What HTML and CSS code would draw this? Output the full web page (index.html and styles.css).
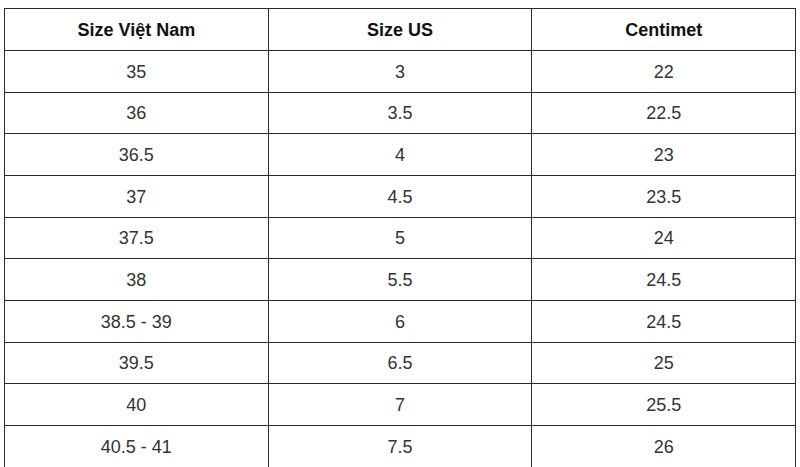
FILE: index.html
```html
<!DOCTYPE html>
<html lang="vi">
<head>
<meta charset="utf-8">
<title>Bảng size</title>
<link rel="stylesheet" href="styles.css">
</head>
<body>
<table class="size-table">
  <thead>
    <tr><th>Size Việt Nam</th><th>Size US</th><th>Centimet</th></tr>
  </thead>
  <tbody>
    <tr><td>35</td><td>3</td><td>22</td></tr>
    <tr><td>36</td><td>3.5</td><td>22.5</td></tr>
    <tr><td>36.5</td><td>4</td><td>23</td></tr>
    <tr><td>37</td><td>4.5</td><td>23.5</td></tr>
    <tr><td>37.5</td><td>5</td><td>24</td></tr>
    <tr><td>38</td><td>5.5</td><td>24.5</td></tr>
    <tr><td>38.5 - 39</td><td>6</td><td>24.5</td></tr>
    <tr><td>39.5</td><td>6.5</td><td>25</td></tr>
    <tr><td>40</td><td>7</td><td>25.5</td></tr>
    <tr><td>40.5 - 41</td><td>7.5</td><td>26</td></tr>
  </tbody>
</table>
</body>
</html>
```
FILE: styles.css
```css
html, body {
  margin: 0;
  padding: 0;
  background: #fff;
}
body {
  overflow: hidden;
  height: 467px;
}
.size-table {
  margin: 8px 0 0 4px;
  width: 792px;
  border-collapse: collapse;
  table-layout: fixed;
  font-family: "Liberation Sans", Arial, sans-serif;
}
.size-table th,
.size-table td {
  border: 1px solid #2a2a2a;
  text-align: center;
  vertical-align: middle;
  padding: 2px 0 0;
  height: 41.67px;
  box-sizing: border-box;
}
.size-table th {
  font-size: 18px;
  font-weight: bold;
  color: #111;
  height: 42px;
}
.size-table td {
  font-size: 18px;
  color: #333;
}
```
